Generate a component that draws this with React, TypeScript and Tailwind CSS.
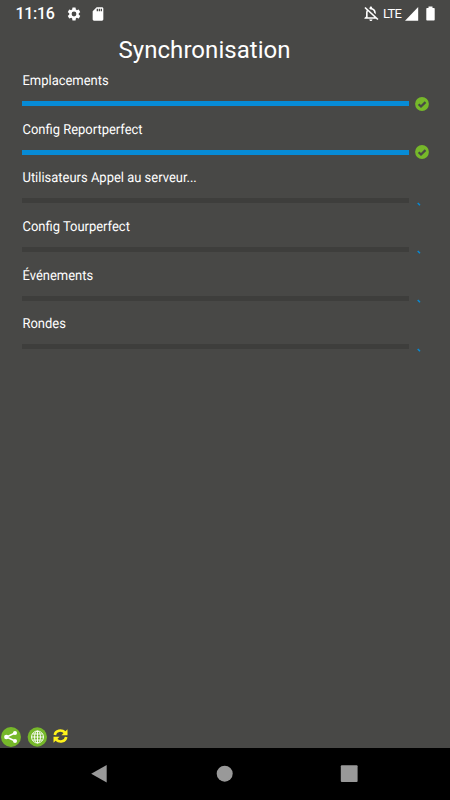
import React from 'react';

type Task = { label: string; done: boolean };

const tasks: Task[] = [
  { label: 'Emplacements', done: true },
  { label: 'Config Reportperfect', done: true },
  { label: 'Utilisateurs Appel au serveur...', done: false },
  { label: 'Config Tourperfect', done: false },
  { label: 'Événements', done: false },
  { label: 'Rondes', done: false },
];

function StatusBar() {
  return (
    <header className="flex h-[27px] items-center pl-[15.500px] pr-[15px]">
      <span className="w-[50.500px] text-[16px] font-medium leading-[27px] tracking-[-0.3px]">11:16</span>
      <svg className="h-4 w-4" viewBox="0 0 24 24" fill="currentColor">
        <path d="M19.14 12.94c.04-.3.06-.61.06-.94s-.02-.64-.07-.94l2.03-1.58a.5.5 0 0 0 .12-.61l-1.92-3.32a.49.49 0 0 0-.59-.22l-2.39.96a7 7 0 0 0-1.62-.94l-.36-2.54a.48.48 0 0 0-.48-.41h-3.84a.48.48 0 0 0-.47.41l-.36 2.54c-.59.24-1.13.57-1.62.94l-2.39-.96a.49.49 0 0 0-.59.22L2.74 8.87a.48.48 0 0 0 .12.61l2.03 1.58a6 6 0 0 0 0 1.88l-2.03 1.58a.5.5 0 0 0-.12.61l1.92 3.32c.12.22.37.29.59.22l2.39-.96c.5.38 1.03.7 1.62.94l.36 2.54c.05.24.24.41.48.41h3.84c.24 0 .44-.17.47-.41l.36-2.54a7 7 0 0 0 1.62-.94l2.39.96c.22.08.47 0 .59-.22l1.92-3.32a.48.48 0 0 0-.12-.61zM12 15.6A3.6 3.6 0 1 1 12 8.4a3.6 3.6 0 0 1 0 7.2z" />
      </svg>
      <svg className="ml-2 h-4 w-4" viewBox="0 0 24 24" fill="currentColor">
        <path d="M18 2h-8L4 8v12c0 1.1.9 2 2 2h12c1.1 0 2-.9 2-2V4c0-1.1-.9-2-2-2zm-6 6h-2V4h2zm3 0h-2V4h2zm3 0h-2V4h2z" />
      </svg>
      <svg className="ml-auto h-[15px] w-[15px]" viewBox="3.500 2 18.500 20" preserveAspectRatio="none" fill="currentColor">
        <path d="M12 22c1.1 0 2-.9 2-2h-4c0 1.100.9 2 2 2zM12 6.500c2.490 0 4 2.020 4 4.500v.1l2 2V11c0-3.070-1.630-5.640-4.500-6.320V4c0-.83-.67-1.500-1.500-1.500s-1.500.67-1.500 1.500v.68c-.24.06-.47.15-.69.23l1.640 1.640c.18-.02.36-.05.55-.05zM5.410 3.350 4 4.760l2.810 2.810C6.290 8.570 6 9.740 6 11v5l-2 2v1h14.240l1.740 1.740 1.410-1.410zM16 17H8v-6c0-.68.12-1.320.34-1.900L16 16.760z" />
      </svg>
      <span className="ml-1 w-[20px] text-[13px] leading-[26px] tracking-[-0.7px]">LTE</span>
      <svg className="ml-[2px] h-[14px] w-[14px]" viewBox="0 0 14 14" fill="currentColor">
        <path d="M13.200 0v13.700H0z" />
      </svg>
      <svg className="ml-[7px] h-[15px] w-[9px]" viewBox="0 0 9 15" fill="currentColor">
        <path d="M2.500.5h4V2H8q.7 0 .7.700v11q0 .8-.7.800H1q-.7 0-.7-.8v-11Q.3 2 1 2h1.500z" />
      </svg>
    </header>
  );
}

function TaskRow({ label, done }: Task) {
  return (
    <li className="h-[48.670px]">
      <div className="h-[24px] origin-left scale-x-[0.94] pl-[0.500px] text-[13.800px] leading-[25px] [text-rendering:geometricPrecision]">{label}</div>
      <div className="flex h-[21px] items-center">
        <svg className="h-[5px] w-[387px]" preserveAspectRatio="none" viewBox="0 0 387 5">
          <rect width="387" height="5" fill={done ? '#078bd6' : '#3e3e3c'} />
        </svg>
        {done ? (
          <svg className="ml-[6px] h-[14px] w-[14px]" viewBox="0 0 14 14">
            <circle cx="7" cy="7" r="6.900" fill="#76b82a" />
            <path d="m3.600 7.200 2.400 2.300 4.500-4.400" fill="none" stroke="#484846" strokeWidth="2.200" />
          </svg>
        ) : (
          <svg className="ml-[6px] mt-[6px] h-[14px] w-[14px]" viewBox="0 0 14 14">
            <path d="m2.700 6 2.300 2.200" fill="none" stroke="#078bd6" strokeWidth="1.500" />
          </svg>
        )}
      </div>
    </li>
  );
}

function Toolbar() {
  return (
    <div className="mt-auto flex h-[22px] items-center pl-[1px]">
      <svg className="h-5 w-5" viewBox="0 0 20 20">
        <circle cx="10" cy="10" r="10" fill="#76b82a" />
        <path d="M14 6 5.500 10 14 14" fill="none" stroke="white" strokeWidth="1.500" />
        <g fill="white">
          <circle cx="14" cy="6" r="2" />
          <circle cx="5.300" cy="10" r="2.200" />
          <circle cx="14" cy="14" r="2" />
        </g>
      </svg>
      <svg className="ml-[6px] h-5 w-5" viewBox="0 0 20 20">
        <circle cx="10.300" cy="10" r="9.700" fill="#76b82a" />
        <g fill="none" stroke="white" strokeWidth=".9">
          <circle cx="10.500" cy="10" r="6" />
          <ellipse cx="10.500" cy="10" rx="3" ry="6" />
          <path d="M4.500 10h12M10.500 4v12M5.500 7h10M5.500 13h10" />
        </g>
      </svg>
      <svg className="mb-[2px] ml-[6px] h-[14px] w-[15px]" viewBox="0 0 15 14">
        <g fill="none" stroke="#fff21a" strokeWidth="2.600">
          <path d="M1.800 6C2.500 1.300 8.500.2 12 3.500" />
          <path d="M13.200 8C12.500 12.700 6.500 13.800 3 10.500" />
        </g>
        <path d="M14.500.2V6.300H8.400zM.5 13.800V7.700h6.100z" fill="#fff21a" />
      </svg>
    </div>
  );
}

function NavigationBar() {
  return (
    <nav className="flex h-[52px] items-center justify-between bg-black pl-[91px] pr-[92px] text-[#999999]">
      <svg className="h-[18px] w-4" viewBox="0 0 16 18" fill="currentColor">
        <path d="M15.700 0v17.500L.2 8.700z" />
      </svg>
      <svg className="ml-[2px] h-[18px] w-[17px]" viewBox="0 0 17 18" fill="currentColor">
        <circle cx="8.700" cy="8.700" r="8" />
      </svg>
      <svg className="h-[18px] w-[18px]" viewBox="0 0 18 18" fill="currentColor">
        <rect x=".8" y=".3" width="16.800" height="16.800" rx="1" />
      </svg>
    </nav>
  );
}

export default function App() {
  return (
    <div className="flex h-[800px] w-[450px] flex-col overflow-hidden bg-[#484846] font-['Roboto',sans-serif] text-white">
      <StatusBar />
      <h1 className="h-[42px] pl-[118.500px] text-[24px] leading-[46px] tracking-[0.05px]">Synchronisation</h1>
      <ul className="pl-[22.300px]">
        {tasks.map((task) => (
          <TaskRow key={task.label} {...task} />
        ))}
      </ul>
      <Toolbar />
      <NavigationBar />
    </div>
  );
}
